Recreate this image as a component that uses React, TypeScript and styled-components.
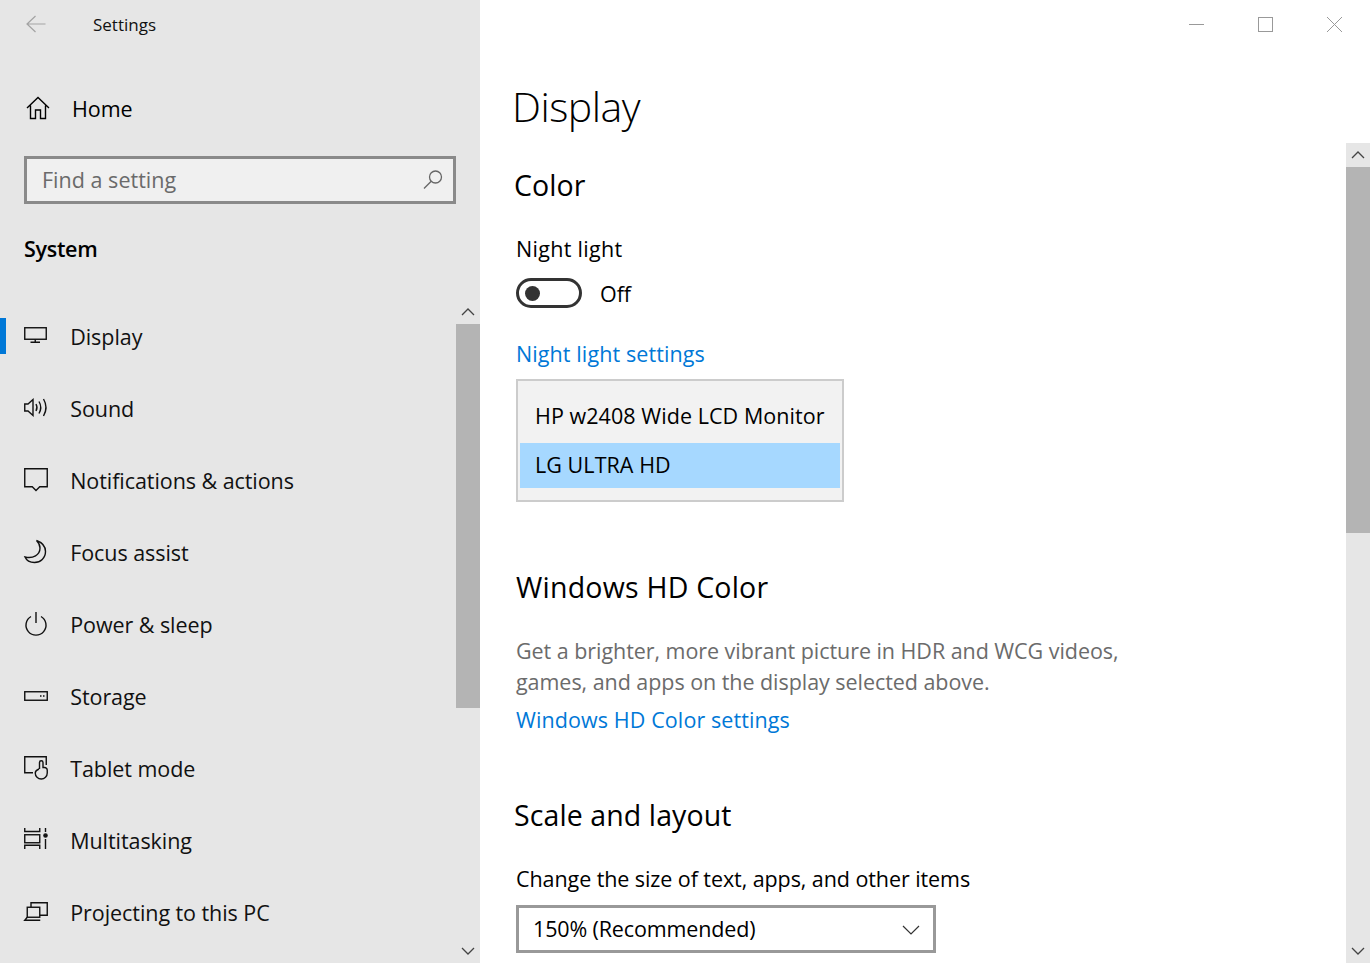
import styled, { createGlobalStyle } from "styled-components";

const GlobalStyle = createGlobalStyle`
  html, body {
    margin: 0;
    height: 100%;
    overflow: hidden;
  }
  body {
    font-family: "Open Sans", "Noto Sans", sans-serif;
    color: #000;
    background: #fff;
  }
  svg {
    display: block;
    fill: none;
    stroke: currentColor;
    overflow: visible;
  }
`;

const Window = styled.div`
  display: flex;
  width: 1370px;
  height: 963px;
  overflow: hidden;
`;

const Sidebar = styled.aside`
  display: flex;
  flex-direction: column;
  flex: 0 0 480px;
  background: #e6e6e6;
`;

const BackRow = styled.div`
  display: flex;
  align-items: center;
  height: 48px;
  padding-left: 26px;
  font-size: 17px;
  color: #111;
`;

const BackIcon = styled.svg`
  width: 20px;
  height: 18px;
  color: #a3a3a3;
  margin-right: 47px;
`;

const HomeRow = styled.div`
  display: flex;
  align-items: center;
  height: 72px;
  margin-top: 24px;
  padding-left: 26px;
  font-size: 21.5px;
  letter-spacing: -0.08px;
`;

const HomeIcon = styled.svg`
  width: 24px;
  height: 24px;
  margin-right: 22px;
`;

const SearchBox = styled.div`
  display: flex;
  align-items: center;
  justify-content: space-between;
  box-sizing: border-box;
  width: 432px;
  height: 48px;
  margin: 12px 0 0 24px;
  padding: 0 10px 2px 15px;
  border: 3px solid #8a8a8a;
  background: #f0f0f0;
  color: #6a6a6a;
  font-size: 21.5px;
  letter-spacing: 0.02px;
`;

const SearchIcon = styled.svg`
  width: 20px;
  height: 20px;
  margin-top: 2px;
  color: #666;
`;

const SectionLabel = styled.div`
  height: 30px;
  line-height: 30px;
  margin: 30px 0 0 24px;
  font-size: 21.5px;
  font-weight: 600;
  letter-spacing: -0.3px;
`;

const NavArea = styled.div`
  display: flex;
  flex: 1;
  min-height: 0;
  margin-top: 36px;
`;

const NavList = styled.nav`
  flex: 1;
  min-width: 0;
`;

const NavItem = styled.div`
  position: relative;
  display: flex;
  align-items: center;
  height: 72px;
  padding-left: 24px;
  font-size: 21.5px;
  letter-spacing: -0.06px;
  color: #111;
`;

const ActiveMark = styled.span`
  position: absolute;
  left: 0;
  top: 18px;
  width: 6px;
  height: 36px;
  background: #0078d7;
`;

const NavIcon = styled.svg`
  flex: 0 0 24px;
  height: 24px;
  margin-right: 22.2px;
`;

const ScrollBar = styled.div`
  display: flex;
  flex-direction: column;
  flex: 0 0 24px;
  background: #e6e6e6;
`;

const ScrollButton = styled.div`
  display: flex;
  align-items: center;
  justify-content: center;
  height: 24px;
  color: #444;
`;

const ScrollThumb = styled.div<{ $size: number }>`
  height: ${(p) => p.$size}px;
  background: #b4b4b4;
`;

const ScrollTrack = styled.div`
  flex: 1;
`;

const Chevron = styled.svg`
  width: 14px;
  height: 8px;
`;

const Main = styled.main`
  display: flex;
  flex-direction: column;
  flex: 1;
  min-width: 0;
`;

const TitleBar = styled.div`
  display: flex;
  justify-content: flex-end;
  align-items: center;
  gap: 54px;
  height: 48px;
  padding-right: 28px;
  color: #999;
`;

const WindowIcon = styled.svg`
  width: 15px;
  height: 15px;
`;

const PageTitle = styled.h1`
  height: 56px;
  line-height: 52px;
  margin: 32px 0 0;
  padding: 0 0 0 32px;
  font-size: 41px;
  font-weight: 300;
  letter-spacing: -0.5px;
`;

const Body = styled.div`
  display: flex;
  flex: 1;
  min-height: 0;
  margin-top: 7px;
`;

const Content = styled.div`
  flex: 1;
  min-width: 0;
  padding: 23px 0 0 36px;
`;

const Heading = styled.h2<{ $top: number; $inset?: number }>`
  height: 40px;
  line-height: 38px;
  margin: ${(p) => p.$top}px 0 0 ${(p) => p.$inset ?? -2}px;
  font-size: 28.5px;
  font-weight: 400;
  letter-spacing: 0.1px;
`;

const WideHeading = styled(Heading)`
  letter-spacing: 0.22px;
`;

const Label = styled.div<{ $top: number }>`
  height: 30px;
  line-height: 30px;
  margin-top: ${(p) => p.$top}px;
  font-size: 21.5px;
  letter-spacing: -0.08px;
`;

const WideLabel = styled(Label)`
  letter-spacing: 0.3px;
`;

const ToggleRow = styled.div`
  display: flex;
  align-items: center;
  gap: 18px;
  height: 30px;
  margin-top: 14px;
  font-size: 21.5px;
  letter-spacing: -0.08px;
`;

const Toggle = styled.span`
  display: flex;
  align-items: center;
  box-sizing: border-box;
  width: 66px;
  height: 30px;
  padding-left: 6px;
  border: 3px solid #333;
  border-radius: 15px;
`;

const ToggleKnob = styled.span`
  width: 15px;
  height: 15px;
  border-radius: 50%;
  background: #333;
`;

const TextLink = styled.a`
  display: block;
  height: 30px;
  line-height: 30px;
  font-size: 21.5px;
  letter-spacing: 0.1px;
  color: #0078d7;
`;

const LinkGap = styled.div<{ $top: number }>`
  margin-top: ${(p) => p.$top}px;
`;

const MonitorList = styled.div`
  box-sizing: border-box;
  width: 328px;
  height: 123px;
  margin-top: 10px;
  padding: 12px 2px;
  border: 2px solid #ccc;
  background: #f2f2f2;
`;

const MonitorOption = styled.div<{ $selected?: boolean }>`
  height: 45px;
  line-height: ${(p) => (p.$selected ? 44 : 46)}px;
  padding-left: 15px;
  font-size: 21.5px;
  letter-spacing: 0.06px;
  background: ${(p) => (p.$selected ? "#a6d8ff" : "transparent")};
  & + & {
    margin-top: 5px;
  }
`;

const Description = styled.p`
  width: 640px;
  margin: 27px 0 0;
  font-size: 21.5px;
  line-height: 31px;
  letter-spacing: -0.05px;
  color: #6b6b6b;
`;

const SelectBox = styled.div`
  display: flex;
  align-items: center;
  justify-content: space-between;
  box-sizing: border-box;
  width: 420px;
  height: 48px;
  margin-top: 11px;
  padding: 0 13px 2px 14px;
  border: 3px solid #999;
  font-size: 21.5px;
  letter-spacing: -0.14px;
`;

const SelectChevron = styled.svg`
  width: 18px;
  height: 10px;
  margin-top: 3px;
  color: #333;
`;

const navItems = [
  {
    label: "Display",
    active: true,
    icon: (
      <>
        <rect x="0.75" y="3.75" width="21.5" height="11.5" />
        <path d="M11.25 15.5v2.5M6.5 18.25h9.5" />
      </>
    ),
  },
  {
    label: "Sound",
    icon: (
      <>
        <path d="M9 3.5L4 8H0.75v7H4l5 4.5z" />
        <path d="M12 8q2 3.5 0 7M15 5.5q3.5 6 0 12M19.5 3q5 8.5 0 17" />
      </>
    ),
  },
  { label: "Notifications & actions", icon: <path d="M0.75 0.75h22.5v18h-7.5L12 22.5l-3.75-3.75h-7.5z" /> },
  {
    label: "Focus assist",
    icon: <path d="M12.5 0.5c5.5 2 9 6 9 11 0 6.5-5 11-11 11-4.5 0-8-2-9.5-5.5 8 2 15-2 15-9 0-3-1.5-5.5-3.5-7.5z" />,
  },
  {
    label: "Power & sleep",
    icon: (
      <>
        <path d="M12 0v11" />
        <path d="M7 4.5a10 10 0 1 0 10 0" />
      </>
    ),
  },
  {
    label: "Storage",
    icon: (
      <>
        <rect x="0.75" y="7.75" width="22.5" height="8.5" />
        <path d="M16 12h1.5M19 12h1.5" />
      </>
    ),
  },
  {
    label: "Tablet mode",
    icon: (
      <>
        <path d="M9 16.75H0.75V0.75h21.5V9" />
        <path d="M15.5 13V6.5a1.75 1.75 0 0 1 3.5 0v5h1.5a2.75 2.75 0 0 1 2.75 2.75V17a6 6 0 0 1-12 0c0-1.5.7-2.8 3.75-4" />
      </>
    ),
  },
  {
    label: "Multitasking",
    icon: (
      <>
        <path d="M0.75 0v3.5h15V0M0.75 21v-3.75h15V21" />
        <rect x="0.75" y="6.75" width="15" height="8" />
        <path d="M21.5 0v4M21.5 11v10" />
        <circle cx="21.5" cy="7.5" r="1.6" fill="currentColor" />
      </>
    ),
  },
  {
    label: "Projecting to this PC",
    icon: (
      <>
        <path d="M7 7V2.75h16.25v12.5H16" />
        <rect x="3.25" y="7.25" width="12.5" height="10" />
        <path d="M3.25 17.25L0.75 20.25h15.5" />
      </>
    ),
  },
];

const App = () => {
  return (
    <Window>
      <GlobalStyle />
      <Sidebar>
        <BackRow>
          <BackIcon viewBox="0 0 20 18" strokeWidth={1.2}>
            <path d="M19.5 9H1M9.5 1L1 9l8.5 8" />
          </BackIcon>
          Settings
        </BackRow>
        <HomeRow>
          <HomeIcon viewBox="0 0 24 24" strokeWidth={1.4}>
            <path d="M1 12L12 1.5 23 12M4.5 9.5V22.5H9.5V14h5v8.5h5V9.5" />
          </HomeIcon>
          Home
        </HomeRow>
        <SearchBox>
          Find a setting
          <SearchIcon viewBox="0 0 20 20" strokeWidth={1.3}>
            <circle cx="12.5" cy="7" r="6" />
            <path d="M8.2 11.3L1 18.5" />
          </SearchIcon>
        </SearchBox>
        <SectionLabel>System</SectionLabel>
        <NavArea>
          <NavList>
            {navItems.map((item) => (
              <NavItem key={item.label}>
                {item.active && <ActiveMark />}
                <NavIcon viewBox="0 0 24 24" strokeWidth={1.4}>
                  {item.icon}
                </NavIcon>
                {item.label}
              </NavItem>
            ))}
          </NavList>
          <ScrollBar>
            <ScrollButton>
              <Chevron viewBox="0 0 14 8" strokeWidth={1.3}>
                <path d="M1 7l6-6 6 6" />
              </Chevron>
            </ScrollButton>
            <ScrollThumb $size={384} />
            <ScrollTrack />
            <ScrollButton>
              <Chevron viewBox="0 0 14 8" strokeWidth={1.3}>
                <path d="M1 1l6 6 6-6" />
              </Chevron>
            </ScrollButton>
          </ScrollBar>
        </NavArea>
      </Sidebar>
      <Main>
        <TitleBar>
          <WindowIcon viewBox="0 0 15 15" strokeWidth={1}>
            <path d="M0 7.5h15" />
          </WindowIcon>
          <WindowIcon viewBox="0 0 15 15" strokeWidth={1}>
            <rect x="0.5" y="0.5" width="14" height="14" />
          </WindowIcon>
          <WindowIcon viewBox="0 0 15 15" strokeWidth={1}>
            <path d="M0 0l15 15M15 0L0 15" />
          </WindowIcon>
        </TitleBar>
        <PageTitle>Display</PageTitle>
        <Body>
          <Content>
            <Heading $top={0}>Color</Heading>
            <WideLabel $top={28}>Night light</WideLabel>
            <ToggleRow>
              <Toggle>
                <ToggleKnob />
              </Toggle>
              Off
            </ToggleRow>
            <LinkGap $top={31}>
              <TextLink>Night light settings</TextLink>
            </LinkGap>
            <MonitorList>
              <MonitorOption>HP w2408 Wide LCD Monitor</MonitorOption>
              <MonitorOption $selected>LG ULTRA HD</MonitorOption>
            </MonitorList>
            <WideHeading $top={66} $inset={0}>
              Windows HD Color
            </WideHeading>
            <Description>
              Get a brighter, more vibrant picture in HDR and WCG videos, games, and apps on the
              display selected above.
            </Description>
            <LinkGap $top={8}>
              <TextLink>Windows HD Color settings</TextLink>
            </LinkGap>
            <Heading $top={61}>Scale and layout</Heading>
            <Label $top={28}>Change the size of text, apps, and other items</Label>
            <SelectBox>
              150% (Recommended)
              <SelectChevron viewBox="0 0 18 10" strokeWidth={1.2}>
                <path d="M1 1l8 8 8-8" />
              </SelectChevron>
            </SelectBox>
          </Content>
          <ScrollBar>
            <ScrollButton>
              <Chevron viewBox="0 0 14 8" strokeWidth={1.3}>
                <path d="M1 7l6-6 6 6" />
              </Chevron>
            </ScrollButton>
            <ScrollThumb $size={366} />
            <ScrollTrack />
            <ScrollButton>
              <Chevron viewBox="0 0 14 8" strokeWidth={1.3}>
                <path d="M1 1l6 6 6-6" />
              </Chevron>
            </ScrollButton>
          </ScrollBar>
        </Body>
      </Main>
    </Window>
  );
};

export default App;
